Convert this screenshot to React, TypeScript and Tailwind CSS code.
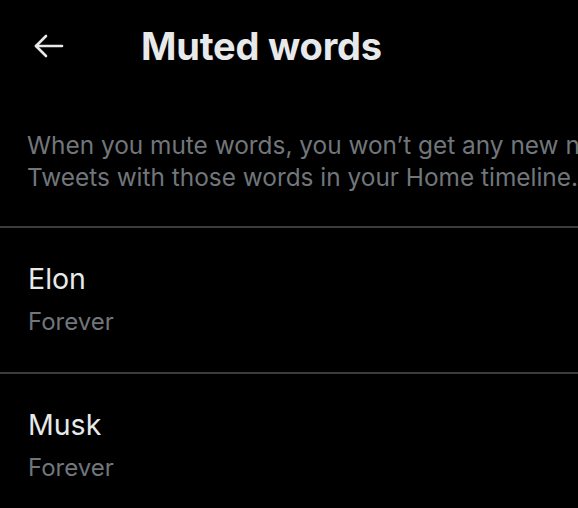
import React from 'react';

const words = ['Elon', 'Musk'];

const App = () => {
  return (
    <div className="w-[578px] h-[508px] overflow-hidden bg-black text-[#e7e9ea]" style={{ fontFamily: 'Inter, "Noto Sans", sans-serif' }}>
      <div className="w-[1100px]">
        <header className="flex items-center h-[92px] pl-[34px]">
          <svg width="30" height="24" viewBox="0 0 30 24" fill="none" stroke="#e7e9ea" strokeWidth="2.6" strokeLinecap="round" strokeLinejoin="round">
            <path d="M2 12h26" />
            <path d="M12 2L2 12l10 10" />
          </svg>
          <h1 className="ml-[77px] text-[38px] font-bold tracking-[-0.2px] leading-none">Muted words</h1>
        </header>

        <div className="pt-[37px] pb-[33px] px-[27px] text-[24.4px] leading-[32px] text-[#71767b]">
          <p className="whitespace-nowrap">When you mute words, you won’t get any new notifications that include them or see</p>
          <p className="whitespace-nowrap">Tweets with those words in your Home timeline.</p>
        </div>

        {words.map((w) => (
          <div key={w} className="border-t-2 border-[#3a3d40] px-[28px] pt-[33px] pb-[34px]">
            <div className="text-[28.5px] leading-[36px]">{w}</div>
            <div className="mt-[9px] text-[24px] leading-[32px] text-[#71767b]">Forever</div>
          </div>
        ))}
      </div>
    </div>
  );
};

export default App;
